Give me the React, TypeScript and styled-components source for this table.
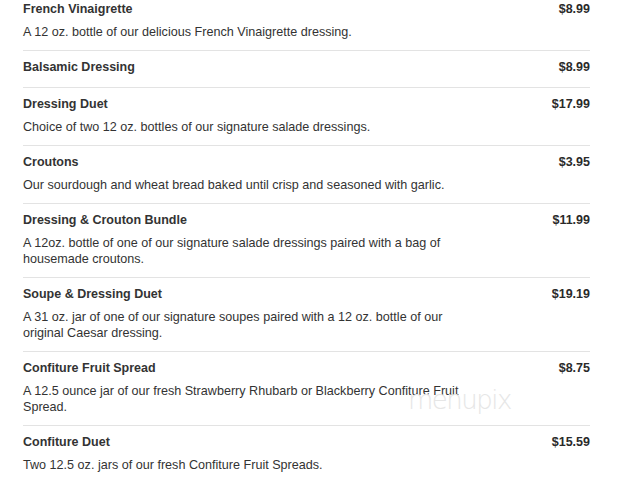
import * as React from 'react';
import styled, { createGlobalStyle } from 'styled-components';

const GlobalStyle = createGlobalStyle`
  html, body {
    margin: 0;
    padding: 0;
    background: #fff;
  }
  body {
    font-family: "Liberation Sans", Arial, sans-serif;
    color: #333;
  }
`;

interface IMenuItem {
  name: string;
  price: string;
  description?: string;
}

const items: IMenuItem[] = [
  { name: 'French Vinaigrette', price: '$8.99', description: 'A 12 oz. bottle of our delicious French Vinaigrette dressing.' },
  { name: 'Balsamic Dressing', price: '$8.99' },
  { name: 'Dressing Duet', price: '$17.99', description: 'Choice of two 12 oz. bottles of our signature salade dressings.' },
  { name: 'Croutons', price: '$3.95', description: 'Our sourdough and wheat bread baked until crisp and seasoned with garlic.' },
  { name: 'Dressing & Crouton Bundle', price: '$11.99', description: 'A 12oz. bottle of one of our signature salade dressings paired with a bag of housemade croutons.' },
  { name: 'Soupe & Dressing Duet', price: '$19.19', description: 'A 31 oz. jar of one of our signature soupes paired with a 12 oz. bottle of our original Caesar dressing.' },
  { name: 'Confiture Fruit Spread', price: '$8.75', description: 'A 12.5 ounce jar of our fresh Strawberry Rhubarb or Blackberry Confiture Fruit Spread.' },
  { name: 'Confiture Duet', price: '$15.59', description: 'Two 12.5 oz. jars of our fresh Confiture Fruit Spreads.' },
];

const Page = styled.div`
  position: relative;
  width: 642px;
  height: 483px;
  overflow: hidden;
  padding: 0 52px 0 23px;
  box-sizing: border-box;
`;

const List = styled.div`
  display: flex;
  flex-direction: column;
  margin-top: -7px;
`;

const Row = styled.div<{ $hasDesc: boolean }>`
  display: flex;
  flex-direction: column;
  padding: 8px 0 ${p => (p.$hasDesc ? '10px' : '11px')};
  border-bottom: 1px solid #e3e3e3;
`;

const RowHead = styled.div`
  display: flex;
  justify-content: space-between;
  align-items: baseline;
`;

const Name = styled.div`
  font-size: 12.5px;
  font-weight: bold;
  line-height: 17px;
  color: #333;
`;

const Price = styled.div`
  font-size: 12.5px;
  font-weight: bold;
  line-height: 17px;
  color: #2a2a2a;
`;

const Description = styled.div`
  margin-top: 6px;
  font-size: 12.6px;
  line-height: 16px;
  color: #333;
  max-width: 450px;
`;

const Watermark = styled.div`
  position: absolute;
  left: 408px;
  top: 385px;
  font-family: "DejaVu Sans", sans-serif;
  font-size: 26px;
  font-weight: 200;
  letter-spacing: -1.5px;
  line-height: 30px;
  color: #e6e6e6;
  pointer-events: none;
`;

export default function App() {
  return (
    <Page>
      <GlobalStyle />
      <List>
        {items.map(item => (
          <Row key={item.name} $hasDesc={!!item.description}>
            <RowHead>
              <Name>{item.name}</Name>
              <Price>{item.price}</Price>
            </RowHead>
            {item.description && <Description>{item.description}</Description>}
          </Row>
        ))}
      </List>
      <Watermark>menupix</Watermark>
    </Page>
  );
}
